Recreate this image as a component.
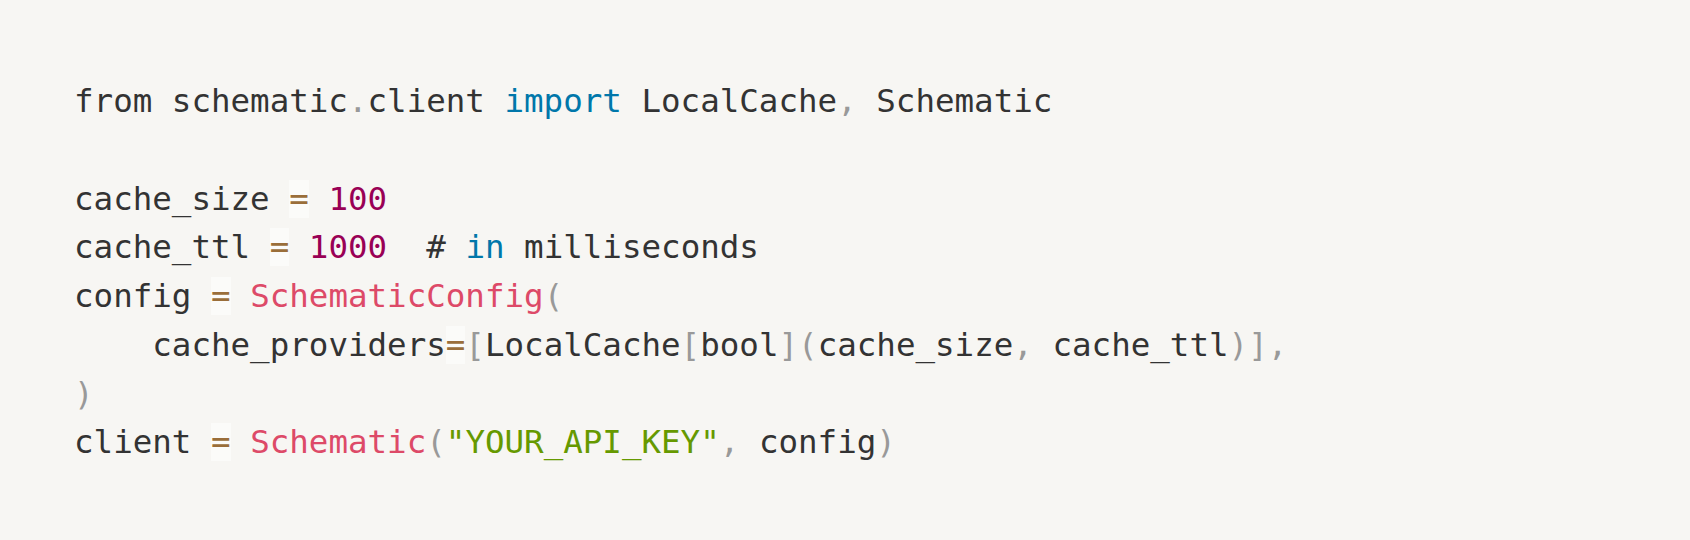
import React from 'react'

const Op = ({ children }: { children: React.ReactNode }) => (
    <span className="text-[#9a6e3a] bg-[hsla(0,0%,100%,0.5)]">{children}</span>
)
const P = ({ children }: { children: React.ReactNode }) => <span className="text-[#999]">{children}</span>
const Kw = ({ children }: { children: React.ReactNode }) => <span className="text-[#07a]">{children}</span>
const Num = ({ children }: { children: React.ReactNode }) => <span className="text-[#905]">{children}</span>
const Fn = ({ children }: { children: React.ReactNode }) => <span className="text-[#dd4a68]">{children}</span>
const Str = ({ children }: { children: React.ReactNode }) => <span className="text-[#690]">{children}</span>

export default function App() {
    return (
        <div className="w-full h-[540px] bg-[#f7f6f3] overflow-hidden">
            <div className="pt-[77px] pl-[74px] font-[family-name:'DejaVu_Sans_Mono',monospace] text-[32.5px] leading-[48.75px] text-[#333] whitespace-pre">
                from schematic<P>.</P>client <Kw>import</Kw> LocalCache<P>,</P> Schematic{'\n'}
                {'\n'}
                cache_size <Op>=</Op> <Num>100</Num>{'\n'}
                cache_ttl <Op>=</Op> <Num>1000</Num>  # <Kw>in</Kw> milliseconds{'\n'}
                config <Op>=</Op> <Fn>SchematicConfig</Fn><P>(</P>{'\n'}
                {'    '}cache_providers<Op>=</Op><P>[</P>LocalCache<P>[</P>bool<P>]</P><P>(</P>cache_size<P>,</P> cache_ttl<P>)</P><P>]</P><P>,</P>{'\n'}
                <P>)</P>{'\n'}
                client <Op>=</Op> <Fn>Schematic</Fn><P>(</P><Str>"YOUR_API_KEY"</Str><P>,</P> config<P>)</P>
            </div>
        </div>
    )
}
